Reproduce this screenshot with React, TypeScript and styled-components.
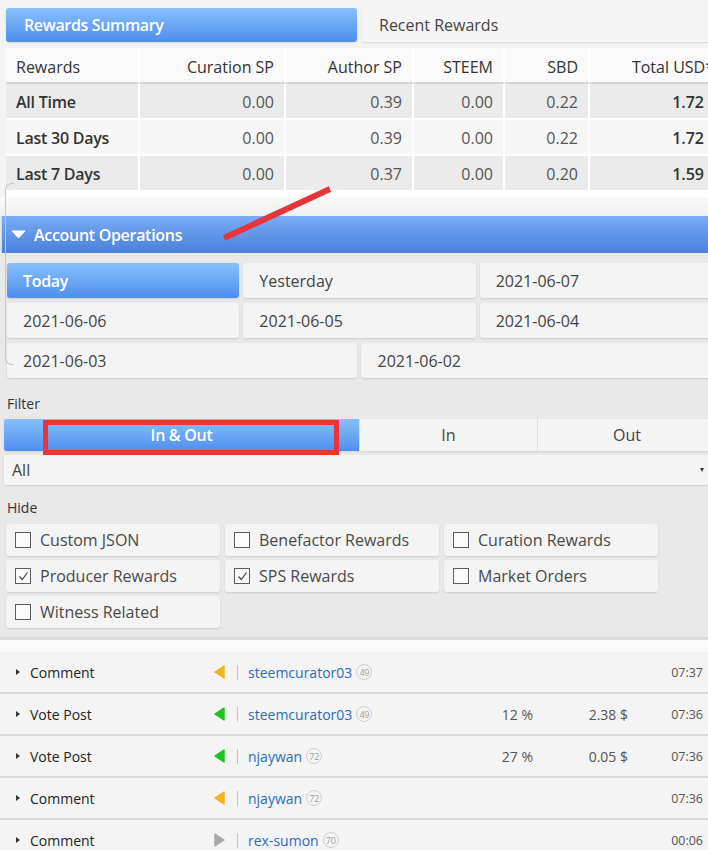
import React from "react";
import styled, { createGlobalStyle } from "styled-components";

const Global = createGlobalStyle`
  html, body {
    margin: 0;
    padding: 0;
    overflow: hidden;
    background: #e9e9e9;
  }
  body {
    font-family: "Open Sans", "Noto Sans", Arial, sans-serif;
    color: #444;
  }
`;

const Page = styled.div`
  position: relative;
  width: 716px;
  overflow: hidden;
`;

/* ---------- rewards summary ---------- */

const Summary = styled.section`
  background: #f3f3f3;
  padding: 8px 0 0 6px;
`;

const TabBar = styled.div`
  display: grid;
  grid-template-columns: 351px 1fr;
  gap: 5px;
  height: 34px;
`;

const blueGradient = `linear-gradient(to bottom, #88c0fb 0%, #4f8ef0 100%)`;

const Tab = styled.div<{ $active?: boolean }>`
  display: flex;
  align-items: center;
  padding-left: ${(p) => (p.$active ? "18px" : "17px")};
  font-size: 16px;
  border-radius: 3px;
  font-weight: ${(p) => (p.$active ? 600 : 400)};
  letter-spacing: ${(p) => (p.$active ? "-0.35px" : "0")};
  color: ${(p) => (p.$active ? "#fff" : "#444")};
  background: ${(p) => (p.$active ? blueGradient : "#f5f5f5")};
  box-shadow: 0 1px 2px rgba(0, 0, 0, 0.12);
`;

const TableWrap = styled.div`
  margin-top: 6px;
  background: #fff;
  padding-bottom: 5px;
`;

const Table = styled.table`
  width: 100%;
  border-collapse: separate;
  border-spacing: 0;
  table-layout: fixed;
  font-size: 16px;
`;

const Th = styled.th<{ $left?: boolean; $last?: boolean }>`
  height: 31px;
  padding: 3px ${(p) => (p.$last ? "0" : "10px")} 0 10px;
  font-weight: 400;
  color: #333;
  text-align: ${(p) => (p.$left ? "left" : "right")};
  background: #fafafa;
  border-right: 2px solid #fff;
  border-bottom: 2px solid #d6d6d6;
  white-space: nowrap;
  overflow: hidden;
  box-sizing: content-box;
`;

const Td = styled.td<{ $left?: boolean; $bold?: boolean; $shade: boolean }>`
  height: 33px;
  padding: 1px 10px 0;
  text-align: ${(p) => (p.$left ? "left" : "right")};
  color: ${(p) => (p.$left || p.$bold ? "#333" : "#555")};
  font-weight: ${(p) => (p.$left || p.$bold ? 600 : 400)};
  letter-spacing: ${(p) => (p.$left ? "-0.25px" : "0")};
  background: ${(p) => (p.$shade ? "#ebebeb" : "#f7f7f7")};
  border-right: 2px solid #fff;
  border-bottom: 2px solid #fff;
  white-space: nowrap;
  box-sizing: content-box;
`;

const Spacer = styled.div`
  height: 19px;
  background: linear-gradient(to bottom, #fafafa, #efefef);
`;

/* ---------- account operations ---------- */

const OpsHeader = styled.div`
  margin-left: 2px;
  height: 37px;
  display: flex;
  align-items: center;
  gap: 8px;
  padding-left: 9px;
  color: #fff;
  font-size: 16px;
  font-weight: 600;
  letter-spacing: -0.3px;
  background: linear-gradient(to bottom, #79acf6 0%, #4a80da 100%);
  box-shadow: 0 1px 2px rgba(0, 0, 0, 0.2);
`;

const Panel = styled.div`
  background: #e9e9e9;
  padding: 10px 0 9px 0;
  border-bottom: 3px solid #dcdcdc;
`;

const DateGrid = styled.div`
  display: grid;
  grid-template-columns: repeat(6, 1fr);
  gap: 5px 4px;
  padding-left: 7px;
  padding-right: 4px;
`;

const DateButton = styled.div<{ $span: number; $active?: boolean }>`
  grid-column: span ${(p) => p.$span};
  height: 35px;
  display: flex;
  align-items: center;
  padding-left: 16px;
  font-size: 16px;
  border-radius: 3px;
  font-weight: ${(p) => (p.$active ? 600 : 400)};
  letter-spacing: ${(p) => (p.$active ? "-0.3px" : "0")};
  color: ${(p) => (p.$active ? "#fff" : "#444")};
  background: ${(p) => (p.$active ? blueGradient : "#f4f4f4")};
  box-shadow: 0 1px 2px rgba(0, 0, 0, 0.12);
`;

const Label = styled.div<{ $top: number; $bottom: number }>`
  font-size: 14px;
  line-height: 19px;
  color: #333;
  padding-left: 7px;
  margin: ${(p) => p.$top}px 0 ${(p) => p.$bottom}px;
`;

const Segments = styled.div`
  display: grid;
  grid-template-columns: 355px 177px 1fr;
  gap: 1px;
  margin-left: 4px;
  height: 32px;
  background: #dcdcdc;
  box-shadow: 0 1px 2px rgba(0, 0, 0, 0.1);
`;

const Segment = styled.div<{ $active?: boolean }>`
  display: flex;
  align-items: center;
  justify-content: center;
  font-size: 16px;
  color: ${(p) => (p.$active ? "#fff" : "#444")};
  font-weight: ${(p) => (p.$active ? 600 : 400)};
  letter-spacing: ${(p) => (p.$active ? "-0.3px" : "0")};
  background: ${(p) => (p.$active ? blueGradient : "#f4f4f4")};
  border-radius: ${(p) => (p.$active ? "3px 0 0 3px" : "0")};
`;

const Select = styled.div`
  margin: 4px 0 0 4px;
  width: 704px;
  height: 30px;
  display: flex;
  align-items: center;
  justify-content: space-between;
  padding: 0 4px 0 8px;
  box-sizing: border-box;
  font-size: 16px;
  color: #444;
  background: #f5f5f5;
  border-radius: 2px;
  box-shadow: 0 1px 2px rgba(0, 0, 0, 0.12);
`;

const Caret = styled.span`
  width: 0;
  height: 0;
  border-left: 2.5px solid transparent;
  border-right: 2.5px solid transparent;
  border-top: 4px solid #333;
`;

const CheckGrid = styled.div`
  display: grid;
  grid-template-columns: repeat(3, 214px);
  gap: 4px 5px;
  padding-left: 6px;
`;

const CheckItem = styled.label`
  height: 32px;
  display: flex;
  align-items: center;
  gap: 9px;
  padding-left: 9px;
  font-size: 16px;
  color: #4a4a4a;
  background: #f4f4f4;
  border-radius: 3px;
  box-shadow: 0 1px 2px rgba(0, 0, 0, 0.12);
`;

const Box = styled.span`
  width: 16px;
  height: 16px;
  border: 1.5px solid #5c5c5c;
  box-sizing: border-box;
  display: flex;
  align-items: center;
  justify-content: center;
  background: #fafafa;
`;

/* ---------- operation list ---------- */

const List = styled.div`
  background: #fbfbfb;
  padding-top: 12px;
`;

const OpRow = styled.div`
  height: 40px;
  display: grid;
  grid-template-columns: 16px 183px 24px 11px 212px 73px 95px 75px;
  align-items: center;
  padding-left: 14px;
  background: #f4f4f4;
  border-bottom: 2px solid #dadada;
`;

const RowCaret = styled.span`
  width: 0;
  height: 0;
  border-top: 3.5px solid transparent;
  border-bottom: 3.5px solid transparent;
  border-left: 4px solid #333;
  margin-left: 2px;
`;

const OpName = styled.span`
  font-size: 14px;
  color: #222;
`;

const Divider = styled.span`
  width: 1px;
  height: 15px;
  background: #c4c4c4;
`;

const Account = styled.span`
  display: flex;
  align-items: center;
  gap: 4px;
  font-size: 14px;
  color: #2d6cb5;
`;

const Rep = styled.span`
  width: 14px;
  height: 14px;
  border: 1px solid #cfcfcf;
  border-radius: 50%;
  font-size: 9px;
  letter-spacing: -0.3px;
  color: #a0a0a0;
  display: flex;
  align-items: center;
  justify-content: center;
  line-height: 1;
`;

const Num = styled.span<{ $size?: number }>`
  text-align: right;
  font-size: ${(p) => p.$size ?? 14}px;
  color: #555;
`;

/* ---------- overlay marks ---------- */

const Edge = styled.div`
  position: absolute;
  left: 5px;
  top: 183px;
  width: 8px;
  height: 180px;
  border: 1px solid #c8c8c8;
  border-right: none;
  border-radius: 7px 0 0 7px;
  pointer-events: none;
`;

const Stroke = styled.svg`
  position: absolute;
  left: 0;
  top: 0;
  pointer-events: none;
`;

const Frame = styled.div`
  position: absolute;
  left: 43px;
  top: 420px;
  width: 296px;
  height: 35px;
  box-sizing: border-box;
  border: 5px solid #e6363b;
  pointer-events: none;
`;

const rewards = [
  { label: "All Time", v: ["0.00", "0.39", "0.00", "0.22", "1.72"] },
  { label: "Last 30 Days", v: ["0.00", "0.39", "0.00", "0.22", "1.72"] },
  { label: "Last 7 Days", v: ["0.00", "0.37", "0.00", "0.20", "1.59"] },
];

const dates: { text: string; span: number; active?: boolean }[] = [
  { text: "Today", span: 2, active: true },
  { text: "Yesterday", span: 2 },
  { text: "2021-06-07", span: 2 },
  { text: "2021-06-06", span: 2 },
  { text: "2021-06-05", span: 2 },
  { text: "2021-06-04", span: 2 },
  { text: "2021-06-03", span: 3 },
  { text: "2021-06-02", span: 3 },
];

const hideOptions = [
  { text: "Custom JSON", checked: false },
  { text: "Benefactor Rewards", checked: false },
  { text: "Curation Rewards", checked: false },
  { text: "Producer Rewards", checked: true },
  { text: "SPS Rewards", checked: true },
  { text: "Market Orders", checked: false },
  { text: "Witness Related", checked: false },
];

type Dir = "in" | "vote" | "out";
const ops: { name: string; dir: Dir; who: string; rep: number; pct?: string; amt?: string; time: string }[] = [
  { name: "Comment", dir: "in", who: "steemcurator03", rep: 49, time: "07:37" },
  { name: "Vote Post", dir: "vote", who: "steemcurator03", rep: 49, pct: "12 %", amt: "2.38 $", time: "07:36" },
  { name: "Vote Post", dir: "vote", who: "njaywan", rep: 72, pct: "27 %", amt: "0.05 $", time: "07:36" },
  { name: "Comment", dir: "in", who: "njaywan", rep: 72, time: "07:36" },
  { name: "Comment", dir: "out", who: "rex-sumon", rep: 70, time: "00:06" },
];

function DirIcon({ dir }: { dir: Dir }) {
  const color = dir === "in" ? "#f2b420" : dir === "vote" ? "#1fc51f" : "#a9a9a9";
  const points = dir === "out" ? "2,1 11,7 2,13" : "11,1 2,7 11,13";
  return (
    <svg width="13" height="14" viewBox="0 0 13 14">
      <polygon points={points} fill={color} stroke={color} strokeWidth="1.5" strokeLinejoin="round" />
    </svg>
  );
}

function Check() {
  return (
    <svg width="11" height="11" viewBox="0 0 11 11">
      <polyline points="1.5,5.5 4.3,8.5 9.5,1.5" fill="none" stroke="#444" strokeWidth="1.2" />
    </svg>
  );
}

export default function App() {
  return (
    <Page>
      <Global />
      <Summary>
        <TabBar>
          <Tab $active>Rewards Summary</Tab>
          <Tab>Recent Rewards</Tab>
        </TabBar>
        <TableWrap>
          <Table>
            <colgroup>
              <col style={{ width: 134 }} />
              <col style={{ width: 146 }} />
              <col style={{ width: 128 }} />
              <col style={{ width: 91 }} />
              <col style={{ width: 85 }} />
              <col />
            </colgroup>
            <thead>
              <tr>
                <Th $left>Rewards</Th>
                <Th>Curation SP</Th>
                <Th>Author SP</Th>
                <Th>STEEM</Th>
                <Th>SBD</Th>
                <Th $last>Total USD*</Th>
              </tr>
            </thead>
            <tbody>
              {rewards.map((r, i) => (
                <tr key={r.label}>
                  <Td $left $shade={i !== 1}>{r.label}</Td>
                  {r.v.map((v, j) => (
                    <Td key={j} $shade={i !== 1} $bold={j === 4}>{v}</Td>
                  ))}
                </tr>
              ))}
            </tbody>
          </Table>
        </TableWrap>
      </Summary>
      <Spacer />

      <OpsHeader>
        <svg width="15" height="9" viewBox="0 0 15 9">
          <polygon points="1,1 14,1 7.5,8" fill="#fff" stroke="#fff" strokeLinejoin="round" />
        </svg>
        Account Operations
      </OpsHeader>

      <Panel>
        <DateGrid>
          {dates.map((d) => (
            <DateButton key={d.text} $span={d.span} $active={d.active}>
              {d.text}
            </DateButton>
          ))}
        </DateGrid>

        <Label $top={16} $bottom={6}>Filter</Label>
        <Segments>
          <Segment $active>In &amp; Out</Segment>
          <Segment>In</Segment>
          <Segment>Out</Segment>
        </Segments>
        <Select>
          All
          <Caret />
        </Select>

        <Label $top={13} $bottom={7}>Hide</Label>
        <CheckGrid>
          {hideOptions.map((o) => (
            <CheckItem key={o.text}>
              <Box>{o.checked && <Check />}</Box>
              {o.text}
            </CheckItem>
          ))}
        </CheckGrid>
      </Panel>

      <List>
        {ops.map((o, i) => (
          <OpRow key={i}>
            <RowCaret />
            <OpName>{o.name}</OpName>
            <DirIcon dir={o.dir} />
            <Divider />
            <Account>
              {o.who}
              <Rep>{o.rep}</Rep>
            </Account>
            <Num>{o.pct ?? ""}</Num>
            <Num>{o.amt ?? ""}</Num>
            <Num $size={12.5}>{o.time}</Num>
          </OpRow>
        ))}
      </List>

      <Edge />
      <Stroke width="716" height="850">
        <line x1="224" y1="238" x2="330" y2="189" stroke="#e6363b" strokeWidth="6" />
      </Stroke>
      <Frame />
    </Page>
  );
}
